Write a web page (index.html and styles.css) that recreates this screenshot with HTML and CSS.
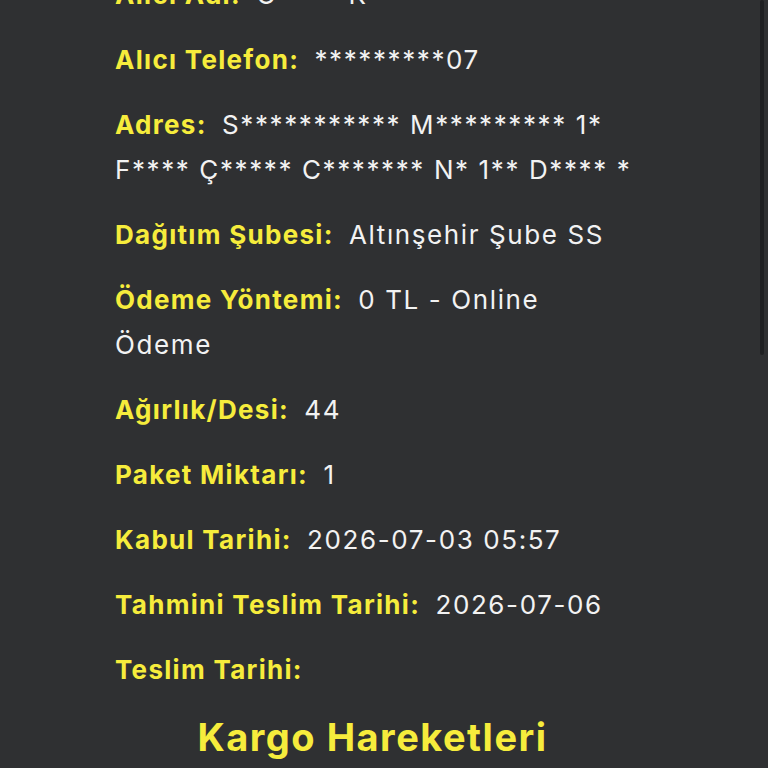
FILE: index.html
```html
<!DOCTYPE html>
<html lang="tr">
<head>
  <meta charset="UTF-8" />
  <title>Kargo Takip</title>
  <link rel="stylesheet" href="styles.css">
</head>
<body>
  <div id="page">
    <div id="content">
      <div id="details">
        <p class="row top-row"><span class="label">Alıcı Adı:</span> <span class="value">G&nbsp;&nbsp;&nbsp;&nbsp;&nbsp;&nbsp;&nbsp;&nbsp;K</span></p>
        <p class="row"><span class="label">Alıcı Telefon:</span> <span class="value">*********07</span></p>
        <p class="row"><span class="label">Adres:</span> <span class="value">S*********** M********* 1* F**** Ç***** C******* N* 1** D**** *</span></p>
        <p class="row"><span class="label">Dağıtım Şubesi:</span> <span class="value">Altınşehir Şube SS</span></p>
        <p class="row"><span class="label">Ödeme Yöntemi:</span> <span class="value">0 TL - Online Ödeme</span></p>
        <p class="row"><span class="label">Ağırlık/Desi:</span> <span class="value">44</span></p>
        <p class="row"><span class="label">Paket Miktarı:</span> <span class="value">1</span></p>
        <p class="row"><span class="label">Kabul Tarihi:</span> <span class="value">2026-07-03 05:57</span></p>
        <p class="row"><span class="label">Tahmini Teslim Tarihi:</span> <span class="value">2026-07-06</span></p>
        <p class="row"><span class="label">Teslim Tarihi:</span> <span class="value"></span></p>
      </div>
      <h2 id="moves-title">Kargo Hareketleri</h2>
    </div>
    <div id="scrollbar"><div id="thumb"></div></div>
  </div>
</body>
</html>
```

FILE: styles.css
```css
html, body {
  margin: 0;
  padding: 0;
  height: 100%;
  font-family: Inter, "Noto Sans", sans-serif;
  background: #2f3032;
  color: #f4f4f4;
  overflow: hidden;
}

#page {
  display: flex;
  height: 100%;
  width: 100%;
}

#content {
  flex-grow: 1;
  padding: 0 0 0 115px;
  box-sizing: border-box;
}

#details {
  width: 520px;
  margin-top: -28px;
}

.row {
  margin: 0 0 20px 0;
  font-size: 26px;
  line-height: 45px;
}

.label {
  color: #f6ec3c;
  font-weight: 700;
  letter-spacing: 1.3px;
  margin-right: 8px;
}

.value {
  color: #f2f2f2;
  font-weight: 400;
  letter-spacing: 1.6px;
}

#moves-title {
  margin: 0;
  width: 515px;
  text-align: center;
  color: #f6ec3c;
  font-size: 38px;
  font-weight: 700;
  letter-spacing: 1.5px;
  line-height: 50px;
}

#scrollbar {
  width: 12px;
  flex-shrink: 0;
  display: flex;
  justify-content: center;
}

#thumb {
  width: 4px;
  height: 355px;
  background: #1f2022;
  border-radius: 2px;
}
```
